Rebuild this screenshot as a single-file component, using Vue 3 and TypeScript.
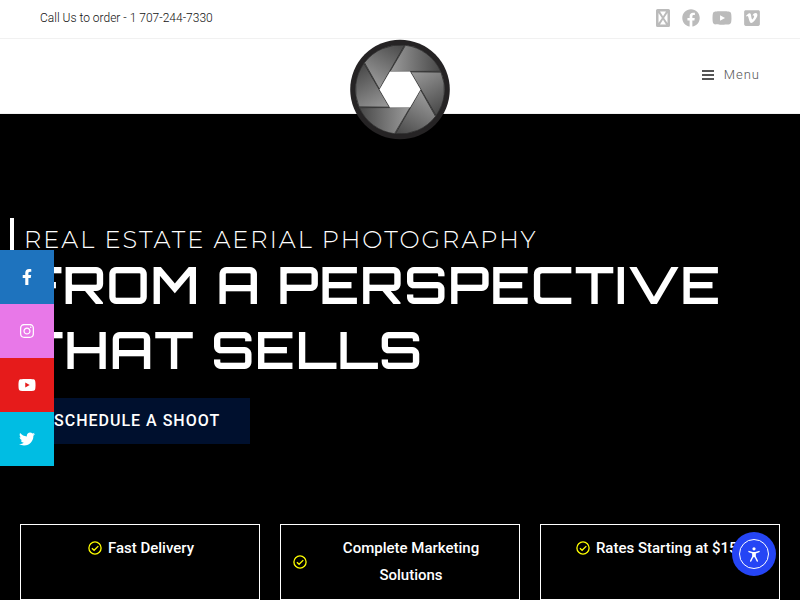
<script setup lang="ts">
interface SocialLink {
  name: string
  box: string
  path: string
  width: number
}

const youtube =
  'M549.655 124.083c-6.281-23.65-24.787-42.276-48.284-48.597C458.781 64 288 64 288 64S117.22 64 74.629 75.486c-23.497 6.322-42.003 24.947-48.284 48.597-11.412 42.867-11.412 132.305-11.412 132.305s0 89.438 11.412 132.305c6.281 23.65 24.787 41.5 48.284 47.821C117.22 448 288 448 288 448s170.78 0 213.371-11.486c23.497-6.321 42.003-24.171 48.284-47.821 11.412-42.867 11.412-132.305 11.412-132.305s0-89.438-11.412-132.305zm-317.51 213.508V175.185l142.739 81.205-142.739 81.201z'

const topLinks: SocialLink[] = [
  {
    name: 'X',
    box: '0 0 14 18',
    width: 14,
    path: 'M1.500 0h11a1.500 1.500 0 0 1 1.500 1.500v15a1.500 1.500 0 0 1-1.500 1.500h-11a1.500 1.500 0 0 1-1.500-1.500v-15a1.500 1.500 0 0 1 1.500-1.500zM4 2.500l3 4.700 3-4.700zM2.500 4v10l3.400-5zM11.500 4v10l-3.400-5zM4 15.500l3-4.700 3 4.700z',
  },
  {
    name: 'Facebook',
    box: '0 0 512 512',
    width: 18,
    path: 'M504 256C504 119 393 8 256 8S8 119 8 256c0 123.780 90.690 226.380 209.250 245V327.690h-63V256h63v-54.640c0-62.150 37-96.480 93.670-96.480 27.140 0 55.520 4.840 55.520 4.840v61h-31.280c-30.800 0-40.410 19.120-40.410 38.730V256h68.780l-11 71.690h-57.780V501C413.310 482.380 504 379.780 504 256z',
  },
  { name: 'YouTube', box: '0 0 576 512', width: 20, path: youtube },
  {
    name: 'Vimeo',
    box: '0 0 448 512',
    width: 16,
    path: 'M403.200 32H44.800C20.100 32 0 52.100 0 76.800v358.400C0 459.900 20.100 480 44.800 480h358.400c24.700 0 44.800-20.100 44.800-44.800V76.800c0-24.700-20.100-44.800-44.800-44.800zM377 180.800c-1.400 31.500-23.400 74.700-66 129.400-44 57.200-81.300 85.800-111.700 85.800-18.900 0-34.800-17.400-47.900-52.300-25.500-93.300-36.400-148-57.400-148-2.400 0-10.900 5.100-25.400 15.200l-15.200-19.600c37.300-32.800 72.900-69.200 95.200-71.200 25.200-2.400 40.700 14.800 46.500 51.700 20.700 131.200 29.900 151 67.600 91.600 13.500-21.400 20.800-37.700 21.800-48.900 3.500-33.200-25.900-30.900-45.800-22.400 15.900-52.100 46.300-77.400 91.200-76 33.300.9 49 22.500 47.100 64.700z',
  },
]

const shareLinks: SocialLink[] = [
  {
    name: 'facebook',
    box: '0 0 320 512',
    width: 10,
    path: 'M279.140 288l14.220-92.660h-88.910v-60.130c0-25.350 12.420-50.060 52.240-50.060h40.420V6.260S260.430 0 225.360 0c-73.220 0-121.080 44.380-121.080 124.720v70.620H22.890V288h81.390v224h100.170V288z',
  },
  {
    name: 'instagram',
    box: '0 0 448 512',
    width: 16,
    path: 'M224.100 141c-63.600 0-114.900 51.300-114.900 114.900s51.300 114.900 114.900 114.900S339 319.500 339 255.900 287.700 141 224.100 141zm0 189.600c-41.100 0-74.700-33.500-74.700-74.700s33.500-74.700 74.700-74.700 74.700 33.500 74.700 74.700-33.600 74.700-74.700 74.700zm146.400-194.300c0 14.900-12 26.800-26.800 26.800-14.900 0-26.800-12-26.800-26.800s12-26.800 26.800-26.800 26.800 12 26.800 26.800zm76.100 27.200c-1.700-35.900-9.900-67.700-36.200-93.900-26.200-26.200-58-34.400-93.900-36.200-37-2.100-147.900-2.100-184.900 0-35.800 1.700-67.600 9.900-93.900 36.100s-34.400 58-36.200 93.900c-2.100 37-2.100 147.900 0 184.900 1.700 35.900 9.900 67.700 36.200 93.900s58 34.400 93.900 36.200c37 2.100 147.900 2.100 184.900 0 35.900-1.700 67.700-9.900 93.900-36.200 26.200-26.200 34.400-58 36.200-93.900 2.100-37 2.100-147.800 0-184.800zM398.800 388c-7.800 19.600-22.900 34.700-42.600 42.600-29.500 11.700-99.500 9-132.100 9s-102.700 2.600-132.100-9c-19.600-7.800-34.700-22.900-42.600-42.600-11.700-29.500-9-99.500-9-132.100s-2.600-102.700 9-132.100c7.800-19.600 22.900-34.700 42.600-42.600 29.500-11.700 99.500-9 132.100-9s102.700-2.600 132.100 9c19.600 7.800 34.700 22.900 42.600 42.600 11.700 29.500 9 99.500 9 132.100s2.700 102.700-9 132.100z',
  },
  { name: 'youtube', box: '0 0 576 512', width: 18, path: youtube },
  {
    name: 'twitter',
    box: '0 0 512 512',
    width: 16,
    path: 'M459.370 151.716c.325 4.548.325 9.097.325 13.645 0 138.720-105.583 298.558-298.558 298.558-59.452 0-114.680-17.219-161.137-47.106 8.447.974 16.568 1.299 25.340 1.299 49.055 0 94.213-16.568 130.274-44.832-46.132-.975-84.792-31.188-98.112-72.772 6.498.974 12.995 1.624 19.818 1.624 9.421 0 18.843-1.300 27.614-3.573-48.081-9.747-84.143-51.980-84.143-102.985v-1.299c13.969 7.797 30.214 12.670 47.431 13.319-28.264-18.843-46.781-51.005-46.781-87.391 0-19.492 5.197-37.360 14.294-52.954 51.655 63.675 129.300 105.258 216.365 109.807-1.624-7.797-2.599-15.918-2.599-24.040 0-57.828 46.782-104.934 104.934-104.934 30.213 0 57.502 12.670 76.670 33.137 23.715-4.548 46.456-13.320 66.599-25.340-7.798 24.366-24.366 44.833-46.132 57.827 21.117-2.273 41.584-8.122 60.426-16.243-14.292 20.791-32.161 39.308-52.628 54.253z',
  },
]

const features: string[] = ['Fast Delivery', 'Complete Marketing Solutions', 'Rates Starting at $150']
const blades: number[] = [0, 60, 120, 180, 240, 300]
</script>

<template>
  <div class="page">
    <div class="topbar">
      <span>Call Us to order - 1 707-244-7330</span>
      <nav class="top-social" aria-label="Social profiles">
        <a v-for="link in topLinks" :key="link.name" href="#" :aria-label="link.name">
          <svg :viewBox="link.box" :width="link.width" height="18">
            <path :d="link.path" fill-rule="evenodd" />
          </svg>
        </a>
      </nav>
    </div>

    <header class="header">
      <a class="logo" href="#" aria-label="Home">
        <svg viewBox="-50 -50.500 100 101" width="100" height="101">
          <defs>
            <linearGradient id="blade" gradientUnits="userSpaceOnUse" x1="-10" y1="-30" x2="38" y2="-30">
              <stop offset="0" stop-color="#9c9c9c" />
              <stop offset="1" stop-color="#4c4c4c" />
            </linearGradient>
          </defs>
          <circle r="49.800" fill="#252324" />
          <circle r="44.500" fill="#707070" />
          <path
            v-for="angle in blades"
            :key="angle"
            :transform="`rotate(${angle})`"
            d="M-10 -18L5.500 -44.200A44.500 44.500 0 0 1 40.600 -18.200Z"
            fill="url(#blade)"
            stroke="#292929"
            stroke-width="0.700"
          />
          <path d="M-10 -18H10L20.500 0L10 18H-10L-20.500 0Z" fill="#fff" />
        </svg>
      </a>
      <button class="menu" type="button">
        <svg viewBox="0 0 12 10" width="12" height="10">
          <path d="M0 0h12v2H0zM0 4h12v2H0zM0 8h12v2H0z" />
        </svg>
        Menu
      </button>
    </header>

    <main class="hero">
      <section class="intro">
        <p class="eyebrow">REAL ESTATE AERIAL PHOTOGRAPHY</p>
        <h1>FROM A PERSPECTIVE THAT SELLS</h1>
        <a class="cta" href="#">SCHEDULE A SHOOT</a>
      </section>
      <ul class="features">
        <li v-for="feature in features" :key="feature">
          <svg viewBox="0 0 14 14" width="14" height="14">
            <circle cx="7" cy="7" r="6.100" />
            <path d="M3.900 7.200L6.100 9.300L10.300 5.100" />
          </svg>
          <span>{{ feature }}</span>
        </li>
      </ul>
    </main>

    <nav class="share" aria-label="Share">
      <a v-for="link in shareLinks" :key="link.name" href="#" :class="link.name" :aria-label="link.name">
        <svg :viewBox="link.box" :width="link.width" height="16"><path :d="link.path" /></svg>
      </a>
    </nav>

    <button class="access" type="button" aria-label="Accessibility options">
      <svg viewBox="0 0 44 44" width="44" height="44">
        <circle cx="22" cy="22" r="14.500" fill="none" stroke="#fff" />
        <circle cx="22" cy="16.800" r="1.600" fill="#fff" />
        <path
          d="M17 19.600L20.500 20.800H23.500L27 19.600M20.900 21V24.500L18.700 29M23.100 21V24.500L25.300 29M22 21V24.500"
          fill="none"
          stroke="#fff"
          stroke-width="1.500"
          stroke-linecap="round"
          stroke-linejoin="round"
        />
      </svg>
    </button>
  </div>
</template>

<style>
body {
  background: #000;
}
</style>

<style scoped>
.page {
  font-family: Roboto, sans-serif;
}

.page svg {
  display: block;
  flex: none;
}

.topbar {
  display: flex;
  align-items: flex-start;
  justify-content: space-between;
  height: 38px;
  padding: 0 40px;
  border-bottom: 1px solid #f1f1f1;
  background: #fff;
  color: #111;
  font-size: 12px;
  font-weight: 300;
  line-height: 36px;
}

.top-social {
  display: flex;
  gap: 12px;
  padding-top: 9px;
}

.top-social a {
  fill: #bbb;
}

.header {
  position: relative;
  display: flex;
  align-items: center;
  justify-content: flex-end;
  height: 74px;
  padding: 0 40px;
  border-bottom: 1px solid #f1f1f1;
  background: #fff;
}

.logo {
  position: absolute;
  top: 0;
  left: 50%;
  transform: translateX(-50%);
}

.menu {
  display: flex;
  align-items: center;
  gap: 10px;
  padding: 0 0 2px;
  border: 0;
  background: none;
  color: #555;
  fill: #555;
  font: 300 13px/24px Roboto, sans-serif;
  letter-spacing: 1px;
}

.hero {
  padding-top: 104px;
  background: #000;
  color: #fff;
}

.intro {
  margin-left: 10px;
  padding: 10px;
  border-left: 4px solid #fff;
}

.eyebrow {
  margin: 0;
  font: 300 24px/24px Montserrat, Inter, sans-serif;
  letter-spacing: 2px;
}

h1 {
  margin: 0 0 16px;
  font: 600 52px/65px Orbitron, "DejaVu Sans", sans-serif;
  letter-spacing: 1px;
}

.cta {
  display: inline-block;
  padding: 0 30px;
  background: #00102e;
  color: #fff;
  font-size: 16px;
  font-weight: 500;
  line-height: 46px;
  letter-spacing: 1px;
  text-decoration: none;
  vertical-align: top;
}

.features {
  display: grid;
  grid-template-columns: repeat(3, 1fr);
  gap: 20px;
  margin: 70px 0 0;
  padding: 0 20px;
  list-style: none;
}

.features li {
  display: flex;
  justify-content: center;
  align-items: flex-start;
  padding: 10px;
  border: 1px solid #fff;
  font-size: 15px;
  font-weight: 500;
  line-height: 27px;
  text-align: center;
}

.features svg {
  margin: 6px 6px 0 2px;
  fill: none;
  stroke: #ff0;
  stroke-width: 1.300;
}

.features li:nth-child(2) svg {
  align-self: center;
  margin-top: 0;
}

.features li:nth-child(2) span {
  flex: 1;
}

.share {
  position: fixed;
  top: 250px;
  left: 0;
}

.share a {
  display: flex;
  align-items: center;
  justify-content: center;
  width: 54px;
  height: 54px;
  fill: #fff;
}

.facebook {
  background: #1e73be;
}

.instagram {
  background: #e878e8;
}

.youtube {
  background: #e61b1b;
}

.twitter {
  background: #00bde3;
}

.access {
  position: fixed;
  right: 24px;
  bottom: 24px;
  padding: 0;
  border: 0;
  border-radius: 50%;
  background: #2545f5;
}
</style>
